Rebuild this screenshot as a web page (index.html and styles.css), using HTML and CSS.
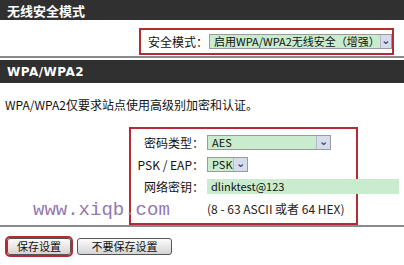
FILE: index.html
```html
<!DOCTYPE html>
<html lang="zh-CN">
<head>
    <meta charset="UTF-8">
    <title>无线安全模式</title>
    <link rel="stylesheet" href="styles.css">
</head>
<body>
    <div class="page">
        <div class="bar bar-top">无线安全模式</div>
        <div class="mode-row">
            <div class="mark mark-mode">
                <span class="label">安全模式：</span>
                <div class="select select-wide">
                    <span class="value">启用WPA/WPA2无线安全（增强）</span>
                    <span class="arrow">&#8964;</span>
                </div>
            </div>
        </div>
        <div class="rule"></div>

        <div class="bar bar-wpa">WPA/WPA2</div>
        <p class="intro">WPA/WPA2仅要求站点使用高级别加密和认证。</p>

        <div class="mark mark-form">
            <div class="field">
                <span class="label">密码类型：</span>
                <div class="select select-cipher">
                    <span class="value">AES</span>
                    <span class="arrow">&#8964;</span>
                </div>
            </div>
            <div class="field">
                <span class="label">PSK / EAP：</span>
                <div class="select select-psk">
                    <span class="value">PSK</span>
                    <span class="arrow">&#8964;</span>
                </div>
            </div>
            <div class="field">
                <span class="label">网络密钥：</span>
                <div class="input-key">dlinktest@123</div>
            </div>
            <div class="field">
                <span class="label"></span>
                <span class="hint">(8 - 63 ASCII 或者 64 HEX)</span>
            </div>
        </div>
        <div class="rule rule-bottom"></div>

        <div class="buttons">
            <button class="btn btn-save">保存设置</button>
            <button class="btn btn-cancel">不要保存设置</button>
        </div>

        <div class="watermark">www.xiqb.com</div>
    </div>
</body>
</html>
```

FILE: styles.css
```css
body {
    margin: 0;
    background: #ffffff;
    font-family: "Noto Sans CJK SC", "DejaVu Sans", sans-serif;
    font-size: 12px;
    color: #111;
}

.page {
    position: relative;
    width: 404px;
    height: 265px;
    overflow: hidden;
}

.bar {
    background: #303030;
    color: #ffffff;
    font-weight: bold;
    font-size: 13px;
    padding-left: 7px;
    display: flex;
    align-items: center;
}

.bar-top {
    height: 20px;
}

.bar-wpa {
    height: 23px;
    font-family: "DejaVu Sans", sans-serif;
    font-size: 12px;
    letter-spacing: 0.5px;
}

.mode-row {
    height: 36px;
    padding-top: 8px;
    box-sizing: border-box;
}

.mark {
    border: 2px solid #b52a33;
    box-sizing: border-box;
}

.mark-mode {
    margin-left: 139px;
    width: 255px;
    height: 27px;
    display: flex;
    align-items: center;
    padding-left: 7px;
}

.mark-mode .label {
    width: 61px;
    flex-shrink: 0;
    white-space: nowrap;
}

.rule {
    height: 2px;
    background: #8a8a8a;
    margin-bottom: 2px;
}

.select {
    height: 15px;
    display: flex;
    align-items: center;
    justify-content: space-between;
    flex-shrink: 0;
    background: #c9ecce;
    border: 1px solid #9a9a9a;
    box-sizing: border-box;
    font-size: 11px;
    white-space: nowrap;
}

.value {
    padding-left: 4px;
    line-height: 13px;
}

.arrow {
    width: 13px;
    height: 13px;
    background: #d7dcec;
    border-left: 1px solid #b5b8c6;
    color: #3a4470;
    font-size: 11px;
    line-height: 8px;
    text-align: center;
    font-weight: bold;
}

.select-wide {
    width: 183px;
}

.intro {
    margin: 12px 0 0 5px;
    height: 20px;
    line-height: 20px;
}

.mark-form {
    margin: 12px 0 0 129px;
    width: 229px;
    height: 98px;
    padding-top: 2px;
}

.field {
    display: flex;
    align-items: center;
    height: 22px;
}

.field .label {
    width: 73px;
    flex-shrink: 0;
    text-align: right;
    padding-right: 3px;
    font-size: 12px;
    white-space: nowrap;
}

.select-cipher {
    width: 124px;
}

.select-psk {
    width: 41px;
}

.input-key {
    width: 192px;
    height: 15px;
    flex-shrink: 0;
    background: #c9ecce;
    font-size: 11px;
    line-height: 15px;
    padding-left: 4px;
    box-sizing: border-box;
    position: relative;
}

.hint {
    font-size: 12px;
    color: #222;
    white-space: nowrap;
}

.buttons {
    display: flex;
    gap: 6px;
    padding: 9px 0 0 7px;
}

.btn {
    height: 17px;
    padding: 0;
    font-family: "Noto Sans CJK SC", sans-serif;
    font-size: 11px;
    line-height: 13px;
    color: #111;
    white-space: nowrap;
    background: linear-gradient(#fbfbfb, #d4d4d4);
    border: 1px solid #555;
    border-radius: 3px;
}

.btn-save {
    width: 64px;
    outline: 2px solid #b52a33;
    outline-offset: 0;
}

.btn-cancel {
    width: 95px;
}

.watermark {
    position: absolute;
    left: 33px;
    top: 199px;
    font-family: "Liberation Mono", monospace;
    font-size: 19px;
    color: #9478b0;
}
```
